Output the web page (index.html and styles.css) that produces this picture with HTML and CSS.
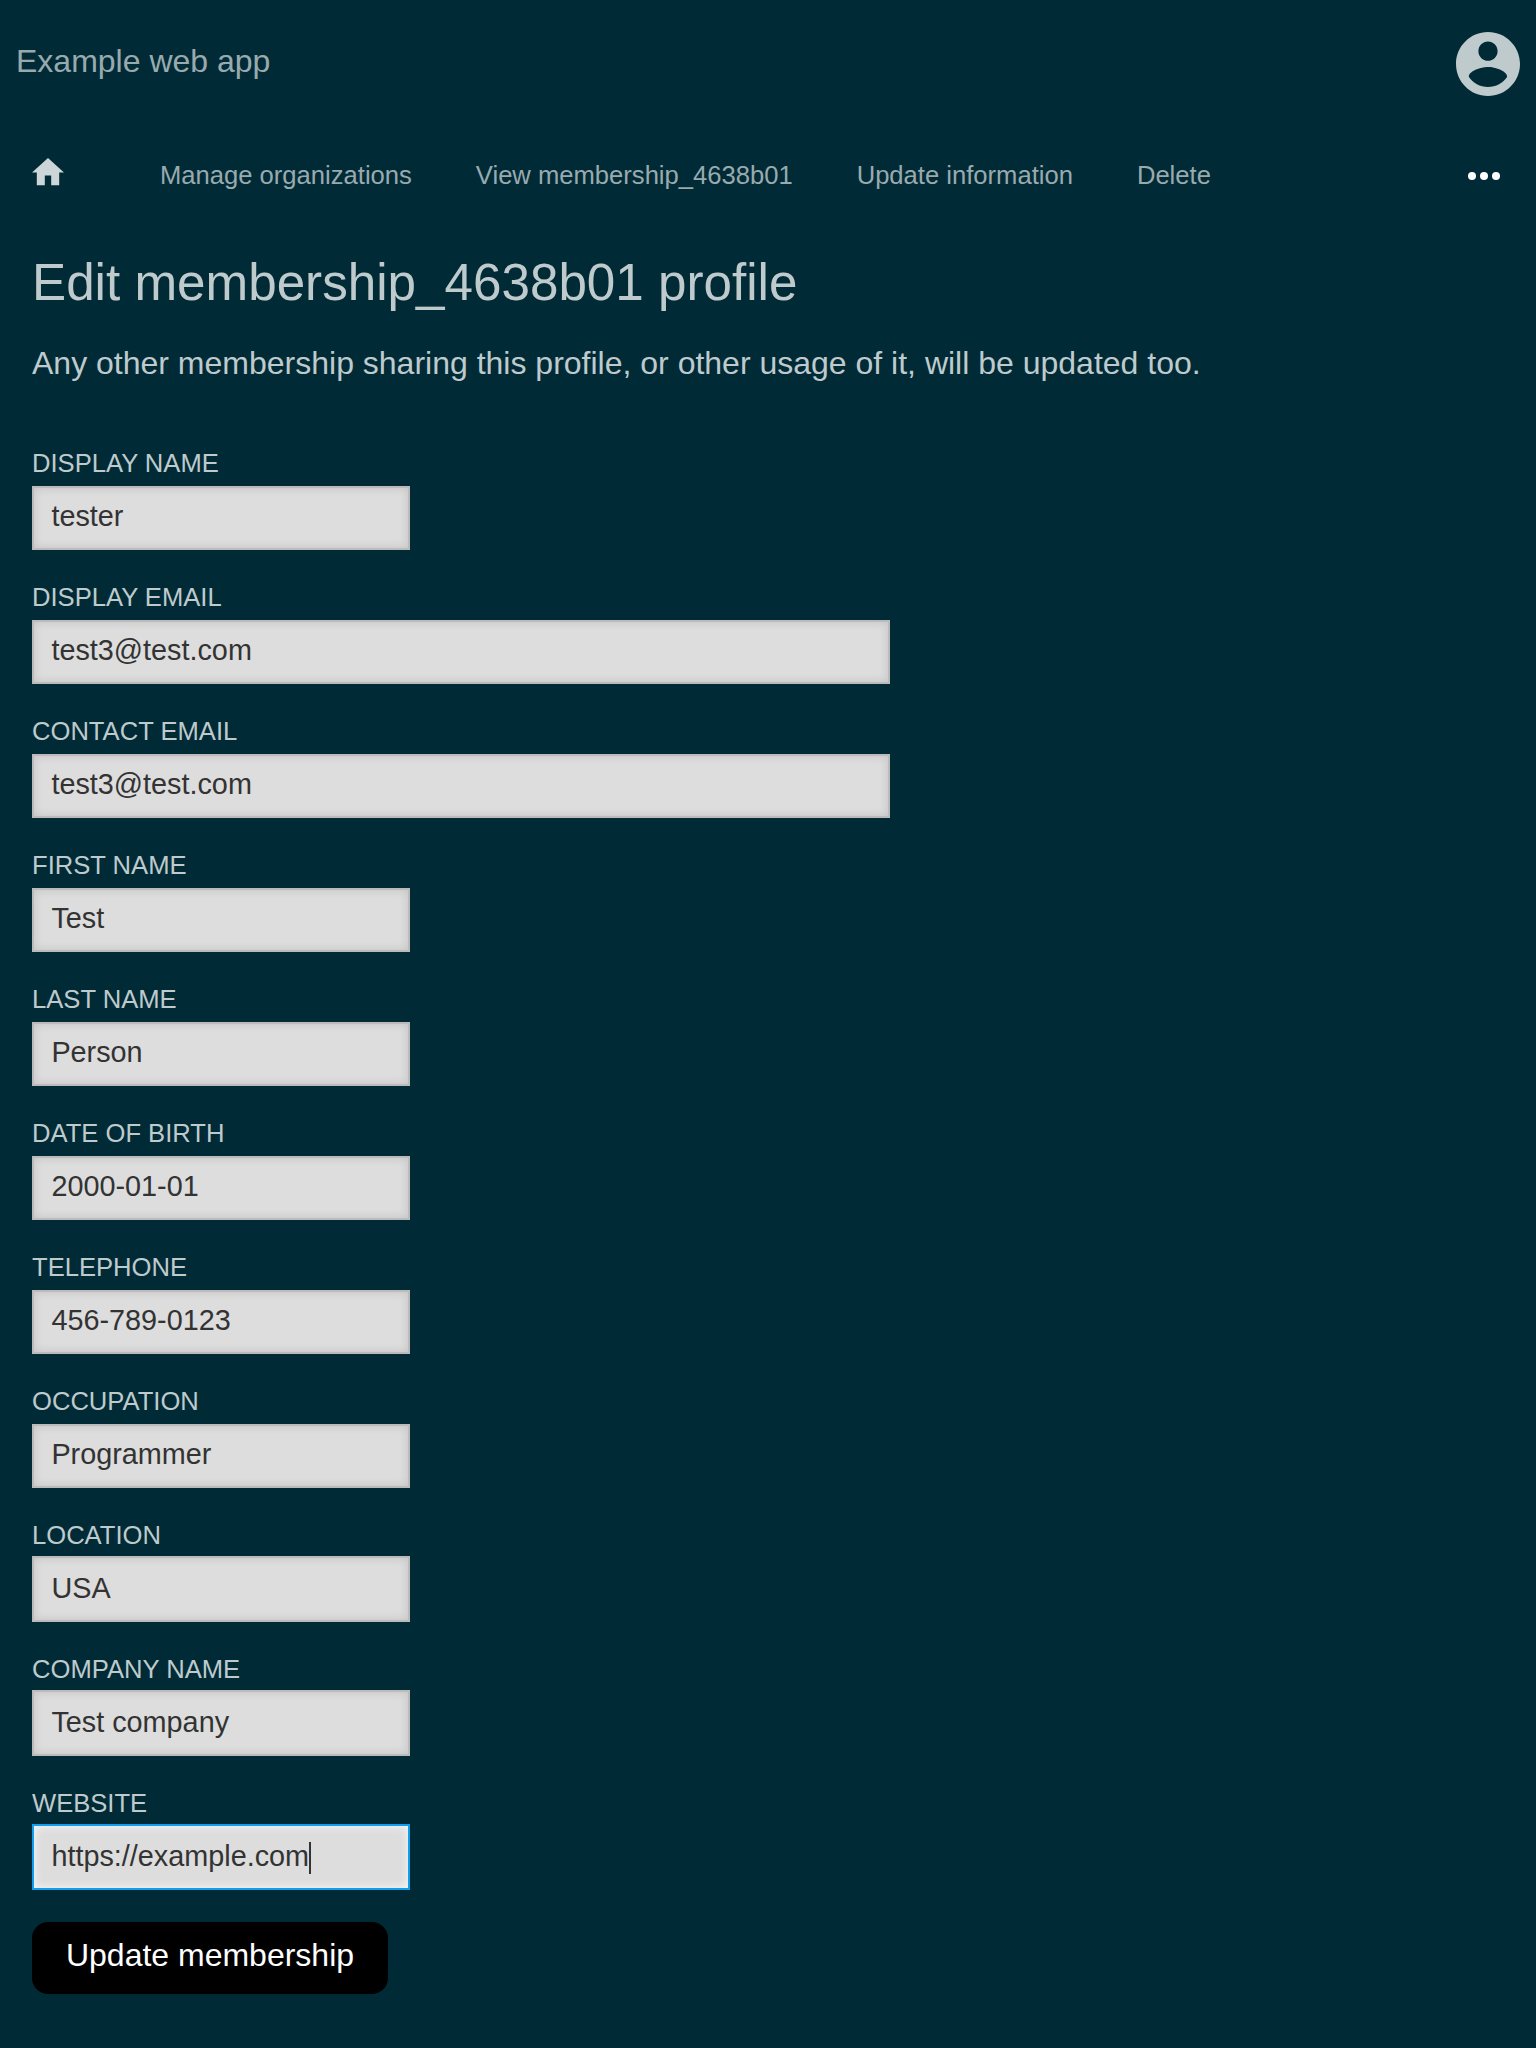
FILE: index.html
```html
<!DOCTYPE html>
<html lang="en">
<head>
<meta charset="utf-8">
<title>Edit profile</title>
<link rel="stylesheet" href="styles.css">
</head>
<body>
<header class="header">
  <a class="brand">Example web app</a>
  <svg class="account" viewBox="2 2 20 20"><path d="M12 2C6.48 2 2 6.48 2 12s4.480 10 10 10 10-4.480 10-10S17.520 2 12 2zm0 3c1.660 0 3 1.340 3 3s-1.340 3-3 3-3-1.340-3-3 1.340-3 3-3zm0 14.200c-2.500 0-4.710-1.280-6-3.220.030-1.990 4-3.080 6-3.080 1.990 0 5.970 1.090 6 3.080-1.290 1.940-3.500 3.220-6 3.220z"/></svg>
</header>
<nav class="nav">
  <svg class="home" viewBox="2 3 20 17"><path d="M10 20v-6h4v6h5v-8h3L12 3 2 12h3v8z"/></svg>
  <a class="link">Manage organizations</a>
  <a class="link">View membership_4638b01</a>
  <a class="link">Update information</a>
  <a class="link">Delete</a>
  <svg class="more" viewBox="4 10 16 4"><circle cx="6" cy="12" r="2"/><circle cx="12" cy="12" r="2"/><circle cx="18" cy="12" r="2"/></svg>
</nav>
<main class="main">
  <h1 class="title">Edit membership_4638b01 profile</h1>
  <p class="note">Any other membership sharing this profile, or other usage of it, will be updated too.</p>
  <form class="form">
    <label class="field"><span class="label">DISPLAY NAME</span><input class="input" value="tester"></label>
    <label class="field"><span class="label">DISPLAY EMAIL</span><input class="input wide" value="test3@test.com"></label>
    <label class="field"><span class="label">CONTACT EMAIL</span><input class="input wide" value="test3@test.com"></label>
    <label class="field"><span class="label">FIRST NAME</span><input class="input" value="Test"></label>
    <label class="field"><span class="label">LAST NAME</span><input class="input" value="Person"></label>
    <label class="field"><span class="label">DATE OF BIRTH</span><input class="input" value="2000-01-01"></label>
    <label class="field"><span class="label">TELEPHONE</span><input class="input" value="456-789-0123"></label>
    <label class="field"><span class="label">OCCUPATION</span><input class="input" value="Programmer"></label>
    <label class="field tall"><span class="label">LOCATION</span><input class="input" value="USA"></label>
    <label class="field tall"><span class="label">COMPANY NAME</span><input class="input" value="Test company"></label>
    <div class="field tall"><span class="label">WEBSITE</span><div class="input active">https://example.com<span class="caret"></span></div></div>
    <button class="submit" type="button">Update membership</button>
  </form>
</main>
</body>
</html>
```
FILE: styles.css
```css
* { box-sizing: border-box; }
body {
  margin: 0;
  background: #002b36;
  color: #bfcacd;
  font-family: "Liberation Sans", Arial, sans-serif;
  font-size: 32px;
  height: 2048px;
  overflow: hidden;
}
.header {
  display: flex;
  justify-content: space-between;
  align-items: flex-start;
  height: 128px;
  padding: 32px 16px 0;
}
.brand { color: #99aaaf; line-height: 58px; }
.account { width: 64px; height: 64px; fill: #bfcacd; }
.nav {
  display: flex;
  align-items: center;
  gap: 64px;
  height: 96px;
  padding: 0 36px 0 32px;
  font-size: 25.6px;
  color: #99aaaf;
}
.link { padding-bottom: 2px; }
.home { width: 32px; height: 27.2px; margin: -8px 32px 0 0; fill: #ccd5d7; }
.more { width: 32px; height: 8px; margin-left: auto; fill: #fff; }
.main { padding: 32px 32px 0; }
.title { margin: 0; font-size: 51.2px; font-weight: 400; line-height: 54px; }
.note { margin: 32px 0 0; line-height: 42px; }
.form { margin-top: 64px; }
.field { display: block; height: 134px; }
.label { display: block; height: 38px; font-size: 25.6px; line-height: 30px; }
.input {
  display: block;
  width: 378px;
  height: 64px;
  margin: 0;
  padding: 0 17.4px 4px;
  border: 2px solid #bbb;
  border-radius: 0;
  background: #ddd;
  box-shadow: inset 0 0 10px rgba(0, 0, 0, .12);
  color: #333;
  font: 28.8px "Liberation Sans", Arial, sans-serif;
}
.wide { width: 858px; }
.tall .label { height: 36px; }
.tall .input { height: 66px; padding-bottom: 2px; }
.active {
  display: flex;
  align-items: center;
  border-color: #109fec;
  box-shadow: inset 0 0 10px rgba(255, 255, 255, .85);
}
.caret { width: 2px; height: 32px; margin-top: 4px; background: #333; }
.submit {
  display: block;
  width: 356px;
  height: 72px;
  margin: 0;
  padding: 0 0 5px;
  border: 0;
  border-radius: 16px;
  background: #000;
  color: #fff;
  font: 32px "Liberation Sans", Arial, sans-serif;
}
```
